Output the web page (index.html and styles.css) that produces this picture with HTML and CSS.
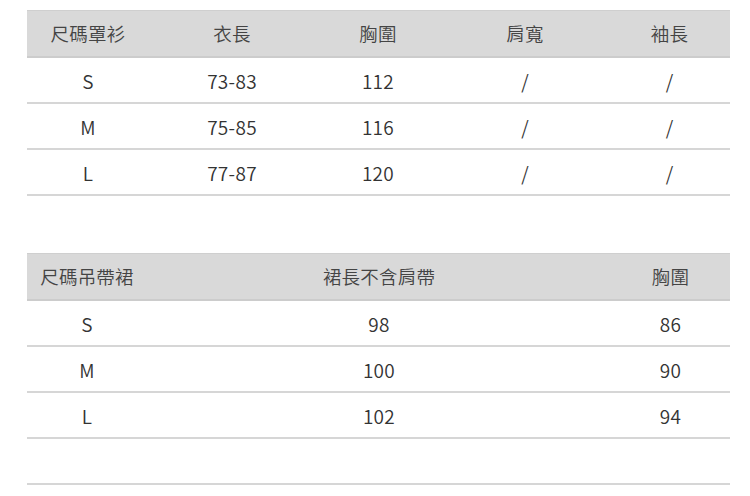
FILE: index.html
```html
<!DOCTYPE html>
<html lang="zh-Hant">
<head>
<meta charset="utf-8">
<link rel="stylesheet" href="styles.css">
</head>
<body>
<div class="page">
  <div class="table t1">
    <div class="row head">
      <div class="cell">尺碼罩衫</div><div class="cell">衣長</div><div class="cell">胸圍</div><div class="cell">肩寬</div><div class="cell">袖長</div>
    </div>
    <div class="row">
      <div class="cell">S</div><div class="cell">73-83</div><div class="cell">112</div><div class="cell">/</div><div class="cell">/</div>
    </div>
    <div class="row">
      <div class="cell">M</div><div class="cell">75-85</div><div class="cell">116</div><div class="cell">/</div><div class="cell">/</div>
    </div>
    <div class="row">
      <div class="cell">L</div><div class="cell">77-87</div><div class="cell">120</div><div class="cell">/</div><div class="cell">/</div>
    </div>
  </div>

  <div class="table t2">
    <div class="row head">
      <div class="cell">尺碼吊帶裙</div><div class="cell">裙長不含肩帶</div><div class="cell">胸圍</div>
    </div>
    <div class="row">
      <div class="cell">S</div><div class="cell">98</div><div class="cell">86</div>
    </div>
    <div class="row">
      <div class="cell">M</div><div class="cell">100</div><div class="cell">90</div>
    </div>
    <div class="row">
      <div class="cell">L</div><div class="cell">102</div><div class="cell">94</div>
    </div>
    <div class="row empty">
      <div class="cell"></div><div class="cell"></div><div class="cell"></div>
    </div>
  </div>
</div>
</body>
</html>
```

FILE: styles.css
```css
html, body {
  margin: 0;
  padding: 0;
  background: #ffffff;
}

body {
  font-family: "Noto Sans CJK TC", "Noto Sans CJK SC", "Noto Sans", sans-serif;
  color: #333333;
}

.page {
  padding: 10px 0 0 27px;
}

.table {
  width: 703px;
}

.t2 {
  margin-top: 57px;
}

.row {
  display: grid;
  height: 44px;
  border-bottom: 2px solid #d6d6d6;
  align-items: center;
  font-size: 19px;
  font-weight: 350;
  letter-spacing: 0.3px;
}

.t1 .row {
  grid-template-columns: 122px 166px 126px 168px 121px;
}

.t2 .row {
  grid-template-columns: 120px 464px 119px;
}

.row.head {
  height: 45px;
  background: #d9d9d9;
  border-top: 1px solid #cfcfcf;
  border-bottom: 2px solid #cccccc;
  color: #444444;
  font-size: 18.5px;
  letter-spacing: 0.2px;
}

.cell {
  text-align: center;
  line-height: 1;
  white-space: nowrap;
}
```
